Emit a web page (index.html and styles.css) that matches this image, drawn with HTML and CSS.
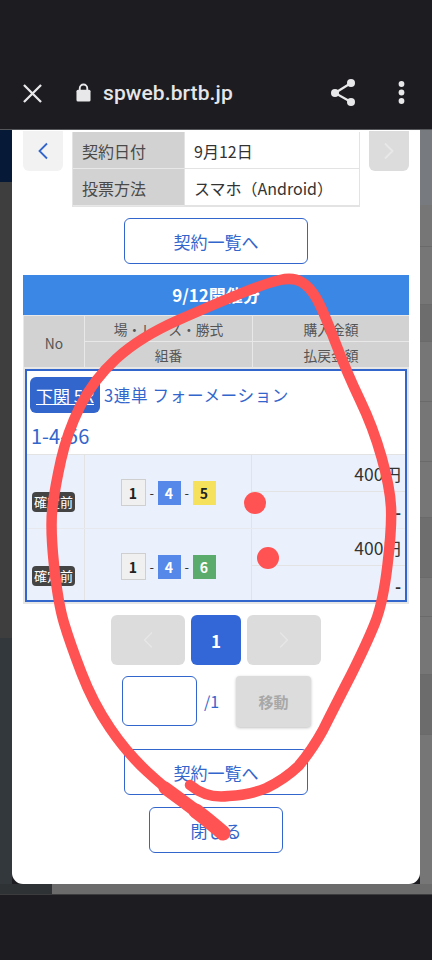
FILE: index.html
```html
<!DOCTYPE html>
<html lang="ja">
<head>
<meta charset="utf-8">
<title>spweb.brtb.jp</title>
<link rel="stylesheet" href="styles.css">
</head>
<body>
<div class="screen">
  <header class="toolbar">
    <svg class="ic-close" viewBox="0 0 20 20"><path d="M1 1L19 19M19 1L1 19"/></svg>
    <svg class="ic-lock" viewBox="0 0 16 20"><path d="M4 8V5.500a4 4 0 0 1 8 0V8" class="shackle"/><rect x="0.500" y="7" width="15" height="12.500" rx="1.600"/></svg>
    <span class="host">spweb.brtb.jp</span>
    <svg class="ic-share" viewBox="0 0 25 27"><path class="ln" d="M20 4L4 14L20 23"/><circle cx="20" cy="4" r="4"/><circle cx="4" cy="14" r="4"/><circle cx="20" cy="23" r="4"/></svg>
    <svg class="ic-more" viewBox="0 0 7 23"><circle cx="3.500" cy="3" r="2.900"/><circle cx="3.500" cy="11.500" r="2.900"/><circle cx="3.500" cy="20" r="2.900"/></svg>
  </header>

  <div class="stage">
    <div class="strip strip-left">
      <div class="navy"></div><div class="dim-a"></div><div class="dim-b"></div>
    </div>

    <main class="modal">
      <div class="top">
        <button class="nav nav-on"><svg viewBox="0 0 12 18"><path d="M10 1.500L2.500 9L10 16.500"/></svg></button>
        <div class="info">
          <div class="k">契約日付</div><div class="v">9月12日</div>
          <div class="k">投票方法</div><div class="v">スマホ（Android）</div>
        </div>
        <button class="nav nav-off"><svg viewBox="0 0 12 18"><path d="M2 1.500L9.500 9L2 16.500"/></svg></button>
      </div>

      <div class="center gap-top"><a class="outline wide">契約一覧へ</a></div>

      <section class="sheet">
        <div class="banner">9/12開催分</div>
        <div class="thead">
          <div class="th th-no">No</div>
          <div class="th">場・レース・勝式</div>
          <div class="th">購入金額</div>
          <div class="th">組番</div>
          <div class="th">払戻金額</div>
        </div>
        <div class="selected">
          <div class="title">
            <div class="title-line"><a class="venue">下関 5R</a><span>3連単 フォーメーション</span></div>
            <div class="combo">1-4-56</div>
          </div>
          <div class="row">
            <div class="c-no"><span class="badge">確定前</span></div>
            <div class="c-combo"><span class="n n1">1</span><i>-</i><span class="n n4">4</span><i>-</i><span class="n n5">5</span></div>
            <div class="c-amt"><div class="amt">400円</div><div class="ret">-</div></div>
          </div>
          <div class="row">
            <div class="c-no"><span class="badge">確定前</span></div>
            <div class="c-combo"><span class="n n1">1</span><i>-</i><span class="n n4">4</span><i>-</i><span class="n n6">6</span></div>
            <div class="c-amt"><div class="amt">400円</div><div class="ret">-</div></div>
          </div>
        </div>
      </section>

      <div class="pager">
        <button class="pg pg-off"><svg viewBox="0 0 12 18"><path d="M10 1.500L2.500 9L10 16.500"/></svg></button>
        <button class="pg pg-on">1</button>
        <button class="pg pg-off"><svg viewBox="0 0 12 18"><path d="M2 1.500L9.500 9L2 16.500"/></svg></button>
      </div>

      <div class="jump">
        <div class="field"></div>
        <span class="total">/1</span>
        <button class="go">移動</button>
      </div>

      <div class="center gap-list"><a class="outline wide">契約一覧へ</a></div>
      <div class="center gap-close"><a class="outline narrow">閉じる</a></div>
    </main>

    <div class="strip strip-right">
      <div class="b b1"></div><div class="b b2"></div><div class="b b3"></div><div class="b b4"></div><div class="b b5"></div><div class="b b6"></div><div class="b b7"></div><div class="b b8"></div><div class="b b9"></div><div class="b b10"></div><div class="b b11"></div>
    </div>
  </div>

  <div class="under"><div class="under-l"></div><div class="under-r"></div></div>
  <div class="navbar"></div>

  <svg class="scribble" viewBox="0 0 432 960">
    <path class="s1" d="M190 785Q207 799 228.500 796Q250 795 266.500 788Q285 779 298.500 766Q312 750 323 730Q335 706 351 675Q367 643 375 623Q383 603 387.500 565Q392 527 391 507Q390 487 381.500 457Q373 427 360 400Q347 373 335 341.500Q323 310 316.500 298.500Q310 287 301.500 282Q293 277 280 280Q267 283 242 293Q217 303 178.500 320Q140 337 116.500 358.500Q93 380 80 406.500Q67 433 61 460Q55 487 52.500 507Q50 527 54 565Q58 603 64 623Q70 643 81.500 673Q93 703 110 728Q127 753 147 771.500Q167 790 183.500 801.500Q200 813 223 833"/>
    <path class="s3" d="M165 788Q183 801 200 814"/>
    <path class="s2" d="M196 811Q208 820 223 833"/>
    <circle class="dot" cx="255" cy="503" r="11"/>
    <circle class="dot" cx="268" cy="558" r="11"/>
  </svg>
</div>
</body>
</html>
```

FILE: styles.css
```css
* { box-sizing: border-box; }
html, body { margin: 0; padding: 0; }
body { background: #1c1c21; font-family: "Noto Sans CJK JP", "Noto Sans", sans-serif; }
button { font-family: inherit; border: 0; padding: 0; }

.screen { position: relative; width: 432px; height: 960px; overflow: hidden; display: flex; flex-direction: column; }

.toolbar { height: 130px; flex: none; background: #1c1c21; border-bottom: 1px solid #55565a; display: flex; align-items: center; padding: 58px 0 0 23px; color: #e6e6e8; }
.ic-close { width: 19px; height: 19px; flex: none; margin-top: -1px; }
.ic-close path { stroke: #e8e8ea; stroke-width: 2.400; fill: none; }
.ic-lock { width: 15px; height: 19px; flex: none; margin-left: 34px; margin-top: -3px; fill: #e8e8ea; }
.ic-lock .shackle { fill: none; stroke: #e8e8ea; stroke-width: 2; }
.host { font: 500 21px/1 Roboto, sans-serif; margin-left: 12px; letter-spacing: 0.100px; width: 200px; flex: none; }
.ic-share { width: 25px; height: 27px; flex: none; margin-left: 28px; margin-top: -2px; fill: #e8e8ea; }
.ic-share .ln { fill: none; stroke: #e8e8ea; stroke-width: 2.200; }
.ic-more { width: 7px; height: 23px; flex: none; margin-left: 42px; margin-top: -2px; fill: #e8e8ea; }

.stage { flex: none; height: 754px; display: flex; }
.strip { width: 12px; flex: none; display: flex; flex-direction: column; }
.navy { height: 52px; background: #061a38; }
.dim-a { height: 456px; background: #3e3e3e; }
.dim-b { flex: 1; background: #33383c; }
.strip-right { background: #767676; }
.b { border-bottom: 1px solid #6a6a6a; flex: none; }
.b1 { height: 75px; background: #777b80; border: 0; }
.b2 { height: 42px; background: #767676; }
.b3 { height: 58px; }
.b4 { height: 37px; background: #6d6d6d; }
.b5 { height: 60px; }
.b6 { height: 60px; }
.b7 { height: 56px; }
.b8 { height: 60px; background: #6e6e6e; }
.b9 { height: 39px; }
.b10 { height: 58px; }
.b11 { height: 60px; background: #6c6c6c; }

.modal { width: 408px; flex: none; background: #fff; border-radius: 0 0 11px 11px; padding: 1px 11px 0 11px; overflow: hidden; }

.top { display: flex; justify-content: space-between; align-items: flex-start; height: 76px; }
.nav { width: 40px; height: 40px; border-radius: 0 0 6px 6px; display: flex; align-items: center; justify-content: center; }
.nav svg { width: 12px; height: 18px; fill: none; stroke-width: 1.800; }
.nav-on { background: #f2f2f2; }
.nav-on svg { stroke: #3366cc; }
.nav-off { background: #dcdcdc; }
.nav-off svg { stroke: #e8e8e8; }
.info { width: 288px; margin-top: 1px; display: grid; grid-template-columns: 111px 175px; grid-auto-rows: 37px; border: 1px solid #e3e3e3; border-top: 0; font-size: 16px; line-height: 38px; background: #e3e3e3; }
.k { background: #d2d2d2; color: #4a4a4a; padding-left: 9px; border-bottom: 1px solid #e8e8e8; }
.v { background: #fff; color: #333; padding-left: 9px; border-bottom: 1px solid #e3e3e3; border-left: 1px solid #e3e3e3; }

.center { display: flex; justify-content: center; }
.outline { display: flex; align-items: center; justify-content: center; border: 1px solid #3366cc; border-radius: 6px; color: #3366cc; background: #fff; font-size: 17px; height: 46px; }
.wide { width: 184px; }
.narrow { width: 134px; }
.gap-top { margin-top: 11px; }

.sheet { margin-top: 11px; width: 386px; background: #e6e6e6; padding-bottom: 2px; }
.banner { height: 40px; background: #3b87e5; color: #fff; font-size: 17px; font-weight: 700; text-align: center; line-height: 40px; }
.thead { display: grid; grid-template-columns: 61px 168px 157px; grid-template-rows: 26px 26px; background: #e8e8e8; padding-top: 1px; }
.th { background: #d2d2d2; color: #555; font-size: 13.800px; text-align: center; line-height: 27px; border-left: 1px solid #e8e8e8; border-bottom: 1px solid #e8e8e8; }
.th-no { grid-row: span 2; line-height: 54px; }
.selected { margin: 1px 2px 0 2px; border: 2px solid #3366cc; background: #fff; }
.title { height: 84px; padding: 6px 0 0 3px; border-bottom: 1px solid #e3e3e3; color: #3366cc; font-size: 16.600px; }
.title-line { display: flex; align-items: center; gap: 4px; letter-spacing: 0.600px; }
.venue { width: 70px; height: 36px; background: #3366cc; color: #fff; border-radius: 6px; text-decoration: underline; display: flex; align-items: center; justify-content: center; white-space: nowrap; overflow: hidden; font-size: 17px; letter-spacing: 0; }
.combo { font-size: 20px; line-height: 28px; margin-top: 9px; padding-left: 1px; }
.row { display: grid; grid-template-columns: 57px 168px 153px; grid-template-rows: 1fr; height: 74px; background: #ebf1fc; border-bottom: 1px solid #e6e8ee; }
.row + .row { height: 71px; border-bottom: 0; }
.c-no { display: flex; align-items: flex-end; justify-content: flex-start; padding: 0 0 16px 5px; }
.row + .row .c-no { padding-bottom: 14px; }
.badge { display: block; width: 43px; height: 20px; background: #444; color: #fff; font-size: 13px; line-height: 20px; border-radius: 4px; text-align: center; white-space: nowrap; }
.c-combo { border-left: 1px solid #e3e3e3; border-right: 1px solid #e3e3e3; display: flex; align-items: center; justify-content: center; gap: 4px; padding-top: 2px; font-size: 13px; color: #333; }
.row + .row .c-combo { padding-top: 4px; }
.c-combo i { font-style: normal; width: 4px; text-align: center; }
.n { width: 23px; height: 24px; font-size: 14px; font-weight: 700; display: flex; align-items: center; justify-content: center; }
.n1 { width: 25px; height: 27px; background: #f0f0f0; border: 1px solid #cfcfcf; color: #222; }
.n4 { background: #5588e8; color: #fff; }
.n5 { background: #f6e15c; color: #222; }
.n6 { background: #5aab6c; color: #fff; }
.c-amt { display: flex; flex-direction: column; }
.amt { height: 37px; flex: none; border-bottom: 1px solid #e3e3e3; text-align: right; font-size: 17.500px; line-height: 38px; color: #333; padding-right: 4px; }
.ret { height: 30px; flex: none; text-align: right; font-size: 16.500px; line-height: 40px; color: #333; padding-right: 4px; font-weight: 700; }

.pager { display: flex; justify-content: center; gap: 6px; margin-top: 11px; }
.pg { height: 50px; border-radius: 6px; display: flex; align-items: center; justify-content: center; }
.pg svg { width: 12px; height: 18px; fill: none; stroke: #e6e6e6; stroke-width: 1.500; }
.pg-off { width: 74px; background: #dcdcdc; }
.pg-on { width: 50px; background: #3366d6; color: #fff; font-size: 17px; font-weight: 700; }

.jump { display: flex; align-items: flex-start; margin-top: 11px; padding-left: 99px; }
.field { width: 75px; height: 50px; border: 1px solid #3366cc; border-radius: 6px; }
.total { color: #3366cc; font-size: 16px; line-height: 50px; margin-left: 7px; width: 32px; }
.go { width: 75px; height: 51px; border-radius: 4px; background: #dcdcdc; color: #a8a8a8; font-size: 15px; font-weight: 700; box-shadow: 0 1px 3px rgba(0,0,0,.25); }

.gap-list { margin-top: 22px; }
.gap-close { margin-top: 12px; }

.under { height: 11px; flex: none; display: flex; border-bottom: 1px solid #3c3c3e; }
.under-l { width: 52px; background: #2f3235; }
.under-r { flex: 1; background: #6b6b6b; }
.navbar { flex: 1; background: #1c1c21; }

.scribble { position: absolute; left: 0; top: 0; width: 432px; height: 960px; pointer-events: none; }
.s1 { fill: none; stroke: #ff5252; stroke-width: 10.500; stroke-linecap: round; stroke-linejoin: round; }
.s2 { fill: none; stroke: #ff5252; stroke-width: 15; stroke-linecap: round; }
.s3 { fill: none; stroke: #ff5252; stroke-width: 13; stroke-linecap: round; }
.dot { fill: #ff5252; }
```
